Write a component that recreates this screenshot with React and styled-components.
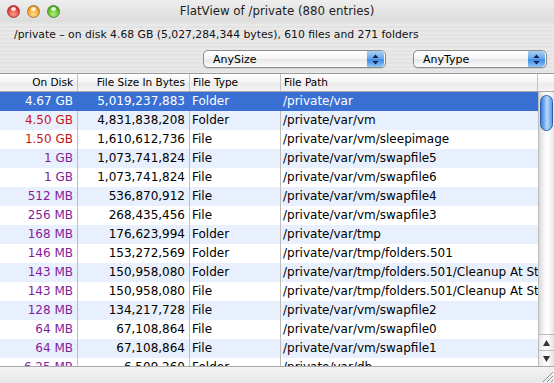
import React from 'react';
import styled, { createGlobalStyle } from 'styled-components';

const GlobalStyle = createGlobalStyle`
  html, body {
    margin: 0;
    padding: 0;
    width: 554px;
    height: 383px;
    overflow: hidden;
    background: #e4e4e4;
  }
  * { box-sizing: border-box; }
`;

const rows = [
  ['4.67 GB', '5,019,237,883', 'Folder', '/private/var', 'sel'],
  ['4.50 GB', '4,831,838,208', 'Folder', '/private/var/vm', 'red'],
  ['1.50 GB', '1,610,612,736', 'File', '/private/var/vm/sleepimage', 'red'],
  ['1 GB', '1,073,741,824', 'File', '/private/var/vm/swapfile5', 'purple'],
  ['1 GB', '1,073,741,824', 'File', '/private/var/vm/swapfile6', 'purple'],
  ['512 MB', '536,870,912', 'File', '/private/var/vm/swapfile4', 'purple'],
  ['256 MB', '268,435,456', 'File', '/private/var/vm/swapfile3', 'purple'],
  ['168 MB', '176,623,994', 'Folder', '/private/var/tmp', 'purple'],
  ['146 MB', '153,272,569', 'Folder', '/private/var/tmp/folders.501', 'purple'],
  ['143 MB', '150,958,080', 'Folder', '/private/var/tmp/folders.501/Cleanup At Startup', 'purple'],
  ['143 MB', '150,958,080', 'File', '/private/var/tmp/folders.501/Cleanup At Startup/x', 'purple'],
  ['128 MB', '134,217,728', 'File', '/private/var/vm/swapfile2', 'purple'],
  ['64 MB', '67,108,864', 'File', '/private/var/vm/swapfile0', 'purple'],
  ['64 MB', '67,108,864', 'File', '/private/var/vm/swapfile1', 'purple'],
  ['6.25 MB', '6,509,260', 'Folder', '/private/var/db', 'purple'],
];

const sizeColors = { red: '#cc1414', purple: '#841c9c', sel: '#ffffff' };

const Window = styled.div`
  width: 554px;
  height: 383px;
  display: flex;
  flex-direction: column;
  font-family: "DejaVu Sans", "Liberation Sans", sans-serif;
  background: repeating-linear-gradient(180deg, #e9e9e9 0px, #e9e9e9 2px, #e3e3e3 2px, #e3e3e3 4px);
  color: #000;
`;

const TitleBar = styled.div`
  height: 22px;
  flex: none;
  display: flex;
  align-items: center;
  position: relative;
  padding-left: 7px;
  background: linear-gradient(180deg, #ededed 0%, #dcdcdc 100%);
`;

const Lights = styled.div`
  display: flex;
  gap: 7px;
`;

const Light = styled.span`
  width: 13px;
  height: 13px;
  border-radius: 50%;
  border: 1px solid ${p => p.$edge};
  background: radial-gradient(circle at 50% 75%, ${p => p.$glow} 0%, ${p => p.$base} 60%, ${p => p.$dark} 100%);
  position: relative;
  &::after {
    content: '';
    position: absolute;
    left: 3px;
    top: 1px;
    width: 5px;
    height: 4px;
    border-radius: 50%;
    background: rgba(255, 255, 255, 0.85);
  }
`;

const Title = styled.div`
  position: absolute;
  left: 0;
  right: 0;
  text-align: center;
  font-size: 11.8px;
  color: #222;
`;

const InfoLine = styled.div`
  height: 24px;
  flex: none;
  font-size: 10.8px;
  padding: 6px 0 0 14px;
  color: #111;
`;

const Filters = styled.div`
  height: 27px;
  flex: none;
  display: flex;
  padding: 4px 0 0 203px;
  gap: 27px;
`;

const Popup = styled.div`
  width: ${p => p.$w}px;
  height: 18px;
  border: 1px solid #8d8d8d;
  border-radius: 5px;
  background: linear-gradient(180deg, #ffffff 0%, #f4f4f4 50%, #e6e6e6 51%, #fbfbfb 100%);
  display: flex;
  align-items: center;
  justify-content: space-between;
  padding-left: 9px;
  font-size: 11px;
  overflow: hidden;
  box-shadow: 0 1px 1px rgba(0,0,0,0.12);
`;

const PopupArrows = styled.div`
  width: 17px;
  height: 16px;
  margin-right: 1px;
  border-radius: 0 4px 4px 0;
  background: linear-gradient(180deg, #a9cff4 0%, #6aaaee 45%, #3d8be6 55%, #8ec6f6 100%);
  display: flex;
  align-items: center;
  justify-content: center;
`;

const Table = styled.div`
  flex: 1;
  display: flex;
  flex-direction: column;
  background: #fff;
  border-top: 1px solid #9a9a9a;
  overflow: hidden;
`;

const HeaderRow = styled.div`
  height: 18px;
  flex: none;
  display: grid;
  grid-template-columns: 78px 112px 91px 1fr 16px;
  background: linear-gradient(180deg, #ffffff 0%, #f3f3f3 50%, #e9e9e9 51%, #f4f4f4 100%);
  border-bottom: 1px solid #a8a8a8;
  font-size: 10.5px;
`;

const HeadCell = styled.div`
  border-right: ${p => (p.$last ? 'none' : '1px solid #c4c4c4')};
  padding: 2px ${p => (p.$right ? '4px' : '0')} 0 ${p => (p.$right ? '0' : '3px')};
  text-align: ${p => (p.$right ? 'right' : 'left')};
  white-space: nowrap;
  overflow: hidden;
`;

const Body = styled.div`
  flex: 1;
  display: flex;
  overflow: hidden;
`;

const RowList = styled.div`
  flex: 1;
  overflow: hidden;
`;

const Row = styled.div`
  height: 19px;
  display: grid;
  grid-template-columns: 78px 112px 91px 1fr;
  background: ${p => (p.$sel ? '#3a70d4' : p.$alt ? '#e9f0fd' : '#ffffff')};
  color: ${p => (p.$sel ? '#fff' : '#000')};
  font-size: 12px;
  line-height: 19px;
`;

const Cell = styled.div`
  border-right: ${p => (p.$last ? 'none' : `1px solid ${p.$sel ? '#3a70d4' : '#bdbdbd'}`)};
  padding: 0 ${p => (p.$right ? '4px' : '0')} 0 ${p => (p.$right ? '0' : '2px')};
  text-align: ${p => (p.$right ? 'right' : 'left')};
  color: ${p => p.$color || 'inherit'};
  white-space: nowrap;
  overflow: hidden;
`;

const ScrollBar = styled.div`
  width: 16px;
  flex: none;
  display: flex;
  flex-direction: column;
  background: linear-gradient(90deg, #d9d9d9 0%, #f6f6f6 35%, #ffffff 60%, #e6e6e6 100%);
  border-left: 1px solid #bbb;
`;

const Track = styled.div`
  flex: 1;
  padding: 3px 0 0 1px;
`;

const Thumb = styled.div`
  width: 13px;
  height: 36px;
  border-radius: 7px;
  border: 1px solid #2f5fa8;
  background: linear-gradient(90deg, #3b7bd8 0%, #8cc0f5 40%, #b7dafb 55%, #5e9ce8 100%);
`;

const ArrowBtn = styled.div`
  height: 16px;
  flex: none;
  display: flex;
  align-items: center;
  justify-content: center;
  border-top: 1px solid #bdbdbd;
  background: linear-gradient(90deg, #e8e8e8 0%, #ffffff 50%, #e3e3e3 100%);
`;

const BottomBar = styled.div`
  height: 17px;
  flex: none;
  border-top: 1px solid #a8a8a8;
  background: linear-gradient(180deg, #f3f3f3 0%, #e8e8e8 100%);
  display: flex;
  justify-content: flex-end;
  align-items: flex-end;
`;

const Triangle = ({ up }) => (
  <svg width="7" height="6" viewBox="0 0 7 6">
    <path d={up ? 'M3.5 0 L7 6 L0 6 Z' : 'M0 0 L7 0 L3.5 6 Z'} fill="#333" />
  </svg>
);

const Chevrons = () => (
  <svg width="7" height="11" viewBox="0 0 7 11">
    <path d="M3.5 0.5 L6.5 4 L0.5 4 Z M0.5 7 L6.5 7 L3.5 10.5 Z" fill="#10224a" />
  </svg>
);

const Grip = () => (
  <svg width="14" height="14" viewBox="0 0 14 14">
    <path d="M13 3 L3 13 M13 7 L7 13 M13 11 L11 13" stroke="#8a8a8a" strokeWidth="1" />
    <path d="M13 4 L4 13 M13 8 L8 13" stroke="#ffffff" strokeWidth="1" />
  </svg>
);

export default function App() {
  return (
    <>
      <GlobalStyle />
      <Window>
        <TitleBar>
          <Lights>
            <Light $base="#e0443e" $glow="#ff9a8c" $dark="#a8201b" $edge="#9c3a36" />
            <Light $base="#f2a42c" $glow="#ffe08a" $dark="#c47812" $edge="#a87630" />
            <Light $base="#5cbb2c" $glow="#b4f07a" $dark="#2f8a12" $edge="#4b8a2c" />
          </Lights>
          <Title>FlatView of /private (880 entries)</Title>
        </TitleBar>
        <InfoLine>/private – on disk 4.68 GB (5,027,284,344 bytes), 610 files and 271 folders</InfoLine>
        <Filters>
          <Popup $w={183}>
            AnySize
            <PopupArrows><Chevrons /></PopupArrows>
          </Popup>
          <Popup $w={134}>
            AnyType
            <PopupArrows><Chevrons /></PopupArrows>
          </Popup>
        </Filters>
        <Table>
          <HeaderRow>
            <HeadCell $right>On Disk</HeadCell>
            <HeadCell $right>File Size In Bytes</HeadCell>
            <HeadCell>File Type</HeadCell>
            <HeadCell>File Path</HeadCell>
            <HeadCell $last />
          </HeaderRow>
          <Body>
            <RowList>
              {rows.map(([disk, bytes, type, path, tone], i) => {
                const sel = tone === 'sel';
                return (
                  <Row key={i} $sel={sel} $alt={i % 2 === 1}>
                    <Cell $right $sel={sel} $color={sizeColors[tone]}>{disk}</Cell>
                    <Cell $right $sel={sel}>{bytes}</Cell>
                    <Cell $sel={sel}>{type}</Cell>
                    <Cell $last>{path}</Cell>
                  </Row>
                );
              })}
            </RowList>
            <ScrollBar>
              <Track><Thumb /></Track>
              <ArrowBtn><Triangle up /></ArrowBtn>
              <ArrowBtn><Triangle /></ArrowBtn>
            </ScrollBar>
          </Body>
        </Table>
        <BottomBar><Grip /></BottomBar>
      </Window>
    </>
  );
}
